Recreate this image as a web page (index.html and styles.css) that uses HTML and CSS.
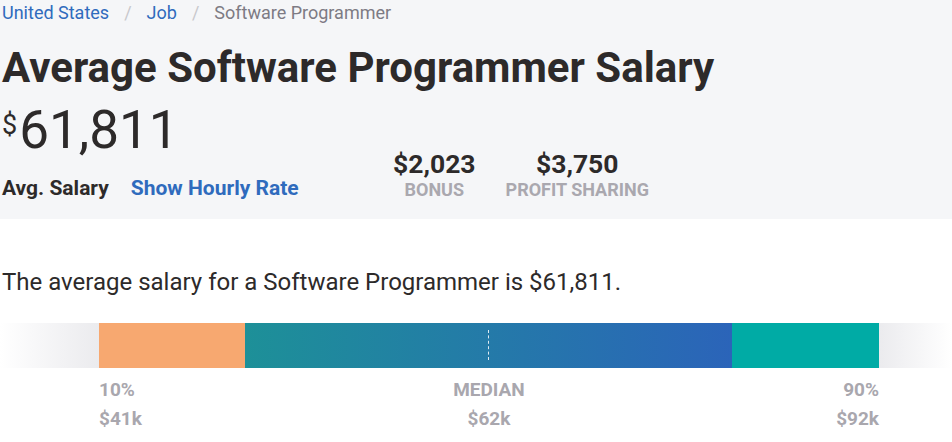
FILE: index.html
```html
<!DOCTYPE html>
<html lang="en">
<head>
  <meta charset="UTF-8">
  <title>Average Software Programmer Salary</title>
  <link rel="stylesheet" href="styles.css">
</head>
<body>
  <div class="summary">
    <div class="breadcrumb">
      <a href="#">United States</a>
      <span class="sep">/</span>
      <a href="#">Job</a>
      <span class="sep">/</span>
      <span class="current">Software Programmer</span>
    </div>
    <h1>Average Software Programmer Salary</h1>
    <div class="pay-row">
      <div class="main-pay">
        <div class="amount"><span class="currency">$</span>61,811</div>
        <div class="pay-meta">
          <span class="pay-label">Avg. Salary</span>
          <a href="#" class="hourly-link">Show Hourly Rate</a>
        </div>
      </div>
      <div class="extras">
        <div class="extra">
          <div class="extra-value">$2,023</div>
          <div class="extra-label">Bonus</div>
        </div>
        <div class="extra">
          <div class="extra-value">$3,750</div>
          <div class="extra-label">Profit Sharing</div>
        </div>
      </div>
    </div>
  </div>

  <p class="summary-text">The average salary for a Software Programmer is $61,811.</p>

  <div class="range">
    <div class="range-bar">
      <div class="fade fade-left"></div>
      <div class="seg seg-low"></div>
      <div class="seg seg-mid"><div class="median-line"></div></div>
      <div class="seg seg-high"></div>
      <div class="fade fade-right"></div>
    </div>
    <div class="range-labels">
      <div class="fade-space"></div>
      <div class="point point-low">
        <div>10%</div>
        <div>$41k</div>
      </div>
      <div class="point point-mid">
        <div>MEDIAN</div>
        <div>$62k</div>
      </div>
      <div class="point point-high">
        <div>90%</div>
        <div>$92k</div>
      </div>
    </div>
  </div>
</body>
</html>
```

FILE: styles.css
```css
body {
  margin: 0;
  background: #fff;
  font-family: Roboto, 'Liberation Sans', Arial, sans-serif;
  color: #2d2a2a;
}
a {
  color: #2f6bbd;
  text-decoration: none;
}
.summary {
  background: #f5f6f8;
  height: 219px;
  padding-left: 2px;
  box-sizing: border-box;
}
.breadcrumb {
  font-size: 18px;
  line-height: 26px;
  display: flex;
  gap: 15px;
}
.breadcrumb .sep {
  color: #c8c8cc;
}
.breadcrumb .current {
  color: #7d7b84;
}
h1 {
  margin: 0;
  padding-top: 18px;
  font-size: 42px;
  line-height: 48px;
  font-weight: 700;
  color: #2d2a2a;
}
.pay-row {
  display: flex;
  align-items: flex-end;
}
.main-pay {
  width: 390px;
}
.amount {
  font-size: 53px;
  line-height: 62px;
  font-weight: 400;
  margin-top: 2px;
}
.currency {
  font-size: 27px;
  vertical-align: 14px;
  margin-right: 2px;
}
.pay-meta {
  display: flex;
  gap: 22px;
  font-size: 21px;
  font-weight: 700;
  line-height: 28px;
  margin-top: 13px;
}
.extras {
  display: flex;
  gap: 30px;
  padding-left: 1px;
}
.extra {
  text-align: center;
}
.extra-value {
  font-size: 26.5px;
  font-weight: 700;
  line-height: 28px;
}
.extra-label {
  font-size: 18px;
  font-weight: 700;
  color: #aaa8af;
  text-transform: uppercase;
  line-height: 24px;
}
.summary-text {
  margin: 49px 0 0 2px;
  font-size: 24px;
  line-height: 28px;
  color: #2d2a2a;
}
.range {
  margin-top: 27px;
}
.range-bar {
  display: flex;
  height: 45px;
}
.fade {
  flex: 0 0 99px;
}
.fade-left {
  background: linear-gradient(to right, #fff, #ebebee);
}
.fade-right {
  flex: 1;
  background: linear-gradient(to right, #ebebee, #fff);
}
.seg-low {
  width: 146px;
  background: #f7a870;
}
.seg-mid {
  width: 487px;
  background: linear-gradient(to right, #1d9098, #2b64b9);
  position: relative;
}
.seg-high {
  width: 147px;
  background: #00aba5;
}
.median-line {
  position: absolute;
  left: 243px;
  top: 7px;
  bottom: 8px;
  border-left: 1px dashed rgba(255, 255, 255, 0.85);
}
.range-labels {
  display: flex;
  font-size: 19px;
  font-weight: 700;
  color: #a9a7ae;
  line-height: 29px;
  margin-top: 7px;
}
.fade-space {
  width: 99px;
}
.point-low {
  width: 317px;
}
.point-mid {
  width: 146px;
  text-align: center;
}
.point-high {
  width: 317px;
  text-align: right;
}
```
